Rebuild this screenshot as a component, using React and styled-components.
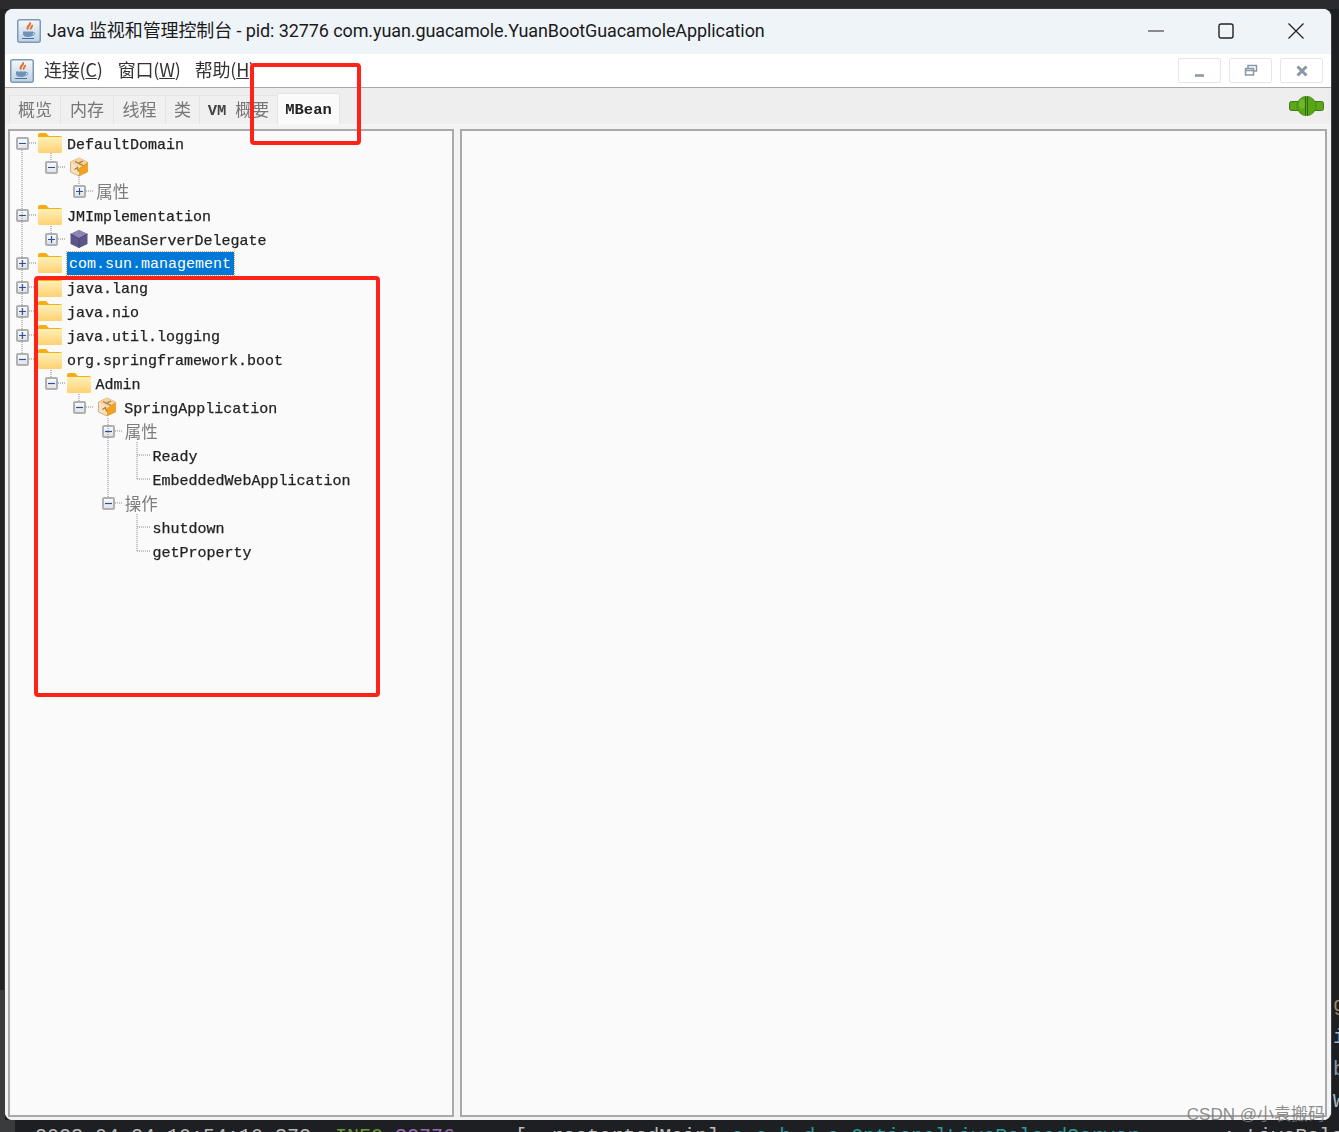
import React from 'react';
import styled, { createGlobalStyle } from 'styled-components';

const Global = createGlobalStyle`
  html, body { margin: 0; padding: 0; background: #1e1f22; }
  #root { width: 1339px; height: 1132px; }
`;

const Page = styled.div`
  position: relative;
  width: 1339px;
  height: 1132px;
  overflow: hidden;
  background: #1e1f22;
  display: grid;
  grid-template-columns: 5px 1326px 8px;
  grid-template-rows: 9px 1111px 12px;
`;
const TopStrip = styled.div`
  grid-column: 1 / 4;
  background: #2b2b2d;
`;
const LeftGutter = styled.div`
  background: linear-gradient(#232325 0 981px, #3a3b3d 981px);
`;
const RightGutter = styled.div`
  overflow: hidden;
  display: flex;
  flex-direction: column;
  padding-top: 985px;
  gap: 9px;
  font: 20px/23px "Liberation Mono", monospace;
  text-indent: 2px;
`;
const Window = styled.div`
  display: flex;
  flex-direction: column;
  background: #f0f0f0;
  border-radius: 8px;
  overflow: hidden;
  box-shadow: 0 0 0 1px #3d3d3f;
`;
const LogLine = styled.div`
  grid-column: 1 / 4;
  overflow: hidden;
  white-space: pre;
  padding: 7px 0 0 35px;
  font: 20px/20px "Liberation Mono", monospace;
  color: #bbbbbb;
  background: linear-gradient(90deg, #3a3b3d 15px, #1e1f22 15px);
`;
const Tone = styled.span`
  color: ${p => p.$c};
`;

const TitleBar = styled.div`
  height: 45px;
  flex: none;
  box-sizing: border-box;
  padding: 0 0 2px 12px;
  display: flex;
  align-items: center;
  background: #eff4f9;
`;
const AppTitle = styled.div`
  margin-left: 6px;
  flex: 1;
  padding-bottom: 3px;
  font: 18px Roboto, "Noto Sans CJK SC", sans-serif;
  letter-spacing: -0.1px;
  color: #1a1a1a;
  white-space: nowrap;
`;
const CaptionButton = styled.div`
  width: 70px;
  height: 43px;
  display: flex;
  align-items: center;
  justify-content: center;
`;
const CaptionGroup = styled.div`
  display: flex;
`;

const MenuBar = styled.div`
  height: 33px;
  flex: none;
  display: flex;
  align-items: center;
  padding: 0 8px 0 5px;
  background: #ffffff;
  border-bottom: 1px solid #a8a8a8;
`;
const MenuItem = styled.span`
  font: 18px "Noto Sans CJK SC", sans-serif;
  letter-spacing: -0.2px;
  color: #333;
  margin-left: ${p => p.$gap}px;
  padding-bottom: 4px;
  white-space: nowrap;
  filter: blur(0.3px);
  u { text-underline-offset: 1px; }
`;
const Spacer = styled.div`
  flex: 1;
`;
const InnerButton = styled.div`
  width: 41px;
  height: 23px;
  margin-left: 8px;
  border: 1px solid #e4e6e8;
  border-radius: 2px;
  display: flex;
  align-items: center;
  justify-content: center;
  background: #fff;
`;

const TabBar = styled.div`
  height: 36px;
  flex: none;
  display: flex;
  align-items: flex-end;
  padding: 0 7px 0 4px;
  background: #eeeeee;
  border-bottom: 1px solid #f6f6f6;
`;
const Tab = styled.div`
  width: ${p => p.$w}px;
  height: ${p => (p.$active ? 31 : 29)}px;
  display: flex;
  align-items: center;
  justify-content: center;
  box-sizing: border-box;
  padding-bottom: 4px;
  background: ${p => (p.$active ? '#fafafa' : '#f0f0f0')};
  border: 1px solid #e4e4e4;
  border-bottom: none;
  margin-right: -1px;
  white-space: pre;
  color: ${p => (p.$active ? '#222' : '#777')};
  font: 17px "Noto Sans CJK SC", sans-serif;
  filter: blur(0.3px);
`;
const MonoBit = styled.span`
  font: bold 15.5px "Liberation Mono", monospace;
  padding-top: 5px;
  color: ${p => p.$c};
  margin-right: ${p => p.$gap || 0}px;
`;
const TabEnd = styled.div`
  margin-left: auto;
  align-self: center;
  display: flex;
`;

const Panels = styled.div`
  flex: 1;
  display: flex;
  gap: 6px;
  padding: 4px 3px 3px 3px;
  background: #f3f3f3;
`;
const Panel = styled.div`
  position: relative;
  box-sizing: border-box;
  width: ${p => p.$w}px;
  border: 2px solid #a9a9a9;
  background: #fafafa;
`;
const Tree = styled.div`
  display: flex;
  flex-direction: column;
`;
const Row = styled.div`
  position: relative;
  height: 24px;
  display: flex;
  align-items: center;
  padding-left: ${p => 6 + p.$level * 28.6}px;
`;
const Expander = styled.div`
  width: 13px;
  height: 13px;
  flex: none;
  margin-right: 10px;
  box-sizing: border-box;
  border: 2px solid #aeb0b3;
  border-radius: 2px;
  background: linear-gradient(#f8f8f8, #e4e4e4);
  display: flex;
  align-items: center;
  justify-content: center;
`;
const EmptySlot = styled.div`
  width: 13px;
  flex: none;
  margin-right: 9px;
`;
const IconSlot = styled.div`
  width: 24px;
  height: 24px;
  flex: none;
  margin: 0 5px 0 -1px;
  display: flex;
  align-items: center;
  justify-content: center;
`;
const Label = styled.span`
  font: 15px/20px "Liberation Mono", monospace;
  padding-top: 5px;
  color: #222;
  white-space: pre;
  -webkit-text-stroke: 0.25px #222;
  filter: blur(0.4px);
`;
const CjkLabel = styled.span`
  font: 16.5px/20px "Noto Sans CJK SC", sans-serif;
  color: #7d7d7d;
  white-space: pre;
  filter: blur(0.35px);
`;
const Selected = styled.span`
  font: 15px/20px "Liberation Mono", monospace;
  color: #fff;
  background: #0078d7;
  outline: 1px dotted #d9a35a;
  padding: 3px 3px 0 2px;
  white-space: pre;
`;
const Guides = styled.svg`
  position: absolute;
  left: 0;
  top: 0;
  pointer-events: none;
`;
const Annotation = styled.div`
  position: absolute;
  left: ${p => p.$x}px;
  top: ${p => p.$y}px;
  width: ${p => p.$w}px;
  height: ${p => p.$h}px;
  box-sizing: border-box;
  border: 4px solid #ff2218;
  border-radius: 4px;
  pointer-events: none;
`;
const Watermark = styled.div`
  position: absolute;
  right: 14px;
  top: 1100px;
  font: 17px "Liberation Sans", "Noto Sans CJK SC", sans-serif;
  color: rgba(120, 120, 120, 0.85);
  white-space: nowrap;
`;

const JavaIcon = ({ size }) => (
  <svg width={size} height={size} viewBox="0 0 24 24">
    <defs>
      <linearGradient id="jg" x1="0" y1="0" x2="0" y2="1">
        <stop offset="0" stopColor="#f6f8fb" />
        <stop offset="1" stopColor="#bcd0e4" />
      </linearGradient>
    </defs>
    <rect x="0.75" y="0.75" width="22.5" height="22.5" rx="2" fill="url(#jg)" stroke="#7d99b5" strokeWidth="1.5" />
    <path d="M12.500 3.500c2.500 2.500-4 3.500-1.500 7M15 6c1 2-2.500 2.500-1 4.500" fill="none" stroke="#e2722a" strokeWidth="2" />
    <path d="M6 12.500h10v2.500c0 2-2 3-5 3s-5-1-5-3z" fill="#6f93b8" />
    <path d="M16 13.500c2.500-.5 2.500 2.500-.5 3" fill="none" stroke="#6f93b8" />
    <path d="M5 19.500h12" stroke="#4f7196" strokeWidth="1.2" />
  </svg>
);
const Folder = () => (
  <svg width="24" height="20" viewBox="0 0 24 20">
    <defs>
      <linearGradient id="fg" x1="0" y1="0" x2="0" y2="1">
        <stop offset="0" stopColor="#ffefb8" />
        <stop offset="1" stopColor="#fdd272" />
      </linearGradient>
    </defs>
    <path d="M0 2C0 .8.800 0 2 0h6l3 3h11c1 0 2 .8 2 2v1H0z" fill="#f5ad12" />
    <path d="M0 4h22.500c1 0 1.500.7 1.500 1.500V18.500c0 1-.7 1.500-1.500 1.500h-21C.7 20 0 19.500 0 18.500z" fill="url(#fg)" />
  </svg>
);
const Cube = ({ purple }) => {
  if (purple) {
    return (
      <svg width="20" height="20" viewBox="0 0 20 20">
        <path d="M10 1l8.500 4v10L10 19l-8.500-4V5z" fill="#5d5488" />
        <path d="M10 1l8.500 4L10 9.500 1.500 5z" fill="#8d84b4" />
        <path d="M1.500 5L10 9.500 18.500 5M10 9.500V19" fill="none" stroke="#453c70" strokeWidth=".8" />
      </svg>
    );
  }
  return (
    <svg width="20" height="20" viewBox="0 0 20 20">
      <path d="M10 1l8.500 4v10L10 19l-8.500-4V5z" fill="#f6e2bf" stroke="#c9a06a" strokeWidth=".8" />
      <path d="M18.500 5v10L10 19v-8z" fill="#f2a01e" />
      <path d="M10 1l8.500 4L10 9.500 1.500 5z" fill="#f3d29c" />
      <path d="M6 4.500l8 4M5.500 12.500l3-2 1 4M10 6l4-2" fill="none" stroke="#a8763a" strokeWidth="1.200" />
    </svg>
  );
};
const Sign = ({ plus }) => (
  <svg width="9" height="9" viewBox="0 0 9 9">
    <path d={plus ? 'M1 4.500h7M4.500 1v7' : 'M1 4.500h7'} stroke="#2a4fa8" strokeWidth="1.200" />
  </svg>
);

const tree = [
  { level: 0, state: 'minus', icon: 'folder', text: 'DefaultDomain' },
  { level: 1, state: 'minus', icon: 'cube' },
  { level: 2, state: 'plus', cjk: '属性' },
  { level: 0, state: 'minus', icon: 'folder', text: 'JMImplementation' },
  { level: 1, state: 'plus', icon: 'purple', text: 'MBeanServerDelegate' },
  { level: 0, state: 'plus', icon: 'folder', text: 'com.sun.management', selected: true },
  { level: 0, state: 'plus', icon: 'folder', text: 'java.lang' },
  { level: 0, state: 'plus', icon: 'folder', text: 'java.nio' },
  { level: 0, state: 'plus', icon: 'folder', text: 'java.util.logging' },
  { level: 0, state: 'minus', icon: 'folder', text: 'org.springframework.boot' },
  { level: 1, state: 'minus', icon: 'folder', text: 'Admin' },
  { level: 2, state: 'minus', icon: 'cube', text: 'SpringApplication' },
  { level: 3, state: 'minus', cjk: '属性' },
  { level: 4, text: 'Ready' },
  { level: 4, text: 'EmbeddedWebApplication' },
  { level: 3, state: 'minus', cjk: '操作' },
  { level: 4, text: 'shutdown' },
  { level: 4, text: 'getProperty' },
];

const guidePaths = [
  'M22 150V353', 'M29 143h8', 'M29 215h8', 'M29 263h8', 'M29 287h8', 'M29 311h8', 'M29 335h8', 'M29 359h8',
  'M51 153v7', 'M58 167h8', 'M79 175v9', 'M86 191h8',
  'M51 226v7', 'M58 239h8',
  'M51 370v7', 'M58 383h7', 'M79 394v7', 'M86 407h8',
  'M108 418v79', 'M115 431h8', 'M115 503h8',
  'M137 442V479', 'M137 455h13', 'M137 479h13',
  'M137 514V551', 'M137 527h13', 'M137 551h13',
];

const TreeRow = ({ r }) => (
  <Row $level={r.level}>
    {r.state ? (
      <Expander>
        <Sign plus={r.state === 'plus'} />
      </Expander>
    ) : (
      <EmptySlot />
    )}
    {r.icon && (
      <IconSlot>
        {r.icon === 'folder' ? <Folder /> : <Cube purple={r.icon === 'purple'} />}
      </IconSlot>
    )}
    {r.cjk && <CjkLabel>{r.cjk}</CjkLabel>}
    {r.text && (r.selected ? <Selected>{r.text}</Selected> : <Label>{r.text}</Label>)}
  </Row>
);

export default function App() {
  return (
    <Page>
      <Global />
      <TopStrip />
      <LeftGutter />
      <Window>
        <TitleBar>
          <JavaIcon size={24} />
          <AppTitle>Java 监视和管理控制台 - pid: 32776 com.yuan.guacamole.YuanBootGuacamoleApplication</AppTitle>
          <CaptionGroup>
            <CaptionButton>
              <svg width="16" height="16" viewBox="0 0 16 16"><path d="M0 8h16" stroke="#222" strokeWidth="1" /></svg>
            </CaptionButton>
            <CaptionButton>
              <svg width="16" height="16" viewBox="0 0 16 16"><rect x="1" y="1" width="14" height="14" rx="2" fill="none" stroke="#222" strokeWidth="1.4" /></svg>
            </CaptionButton>
            <CaptionButton>
              <svg width="16" height="16" viewBox="0 0 16 16"><path d="M.5.500l15 15M15.500.500l-15 15" stroke="#222" strokeWidth="1.3" /></svg>
            </CaptionButton>
          </CaptionGroup>
        </TitleBar>
        <MenuBar>
          <JavaIcon size={24} />
          <MenuItem $gap={10}>连接(<u>C</u>)</MenuItem>
          <MenuItem $gap={15}>窗口(<u>W</u>)</MenuItem>
          <MenuItem $gap={14}>帮助(<u>H</u>)</MenuItem>
          <Spacer />
          <InnerButton>
            <svg width="14" height="14" viewBox="0 0 14 14"><path d="M2 11.500h9" stroke="#8b97a5" strokeWidth="2.600" /></svg>
          </InnerButton>
          <InnerButton>
            <svg width="14" height="14" viewBox="0 0 14 14"><path d="M4 4V1.500h8.500V7H9.500M1.500 4.500h8V11h-8zM1.500 6.500h8" fill="none" stroke="#8b97a5" strokeWidth="1.500" /></svg>
          </InnerButton>
          <InnerButton>
            <svg width="14" height="14" viewBox="0 0 14 14"><path d="M2.500 2.500l9 9M11.500 2.500l-9 9" stroke="#8b97a5" strokeWidth="3" /></svg>
          </InnerButton>
        </MenuBar>
        <TabBar>
          <Tab $w={52}>概览</Tab>
          <Tab $w={54}>内存</Tab>
          <Tab $w={53}>线程</Tab>
          <Tab $w={35}>类</Tab>
          <Tab $w={79}><MonoBit $c="#444" $gap={9}>VM</MonoBit>概要</Tab>
          <Tab $w={63} $active><MonoBit $c="#222">MBean</MonoBit></Tab>
          <TabEnd>
            <svg width="35" height="20" viewBox="0 0 35 20">
              <rect x="0.500" y="5.500" width="34" height="9" rx="2" fill="#5da61e" stroke="#3d7a12" />
              <ellipse cx="17.500" cy="10" rx="9.500" ry="9.800" fill="#58a516" stroke="#3d7a12" strokeWidth=".6" />
              <ellipse cx="13" cy="8" rx="3" ry="5" fill="#6fb82e" />
              <path d="M16.500 .5v19M18.500 .5v19" stroke="#2f6a0c" strokeWidth="1" />
            </svg>
          </TabEnd>
        </TabBar>
        <Panels>
          <Panel $w={446}>
            <Tree>
              {tree.map((r, i) => <TreeRow key={i} r={r} />)}
            </Tree>
            <Guides width="442" height="600" viewBox="10 131 442 600">
              {guidePaths.map(d => (
                <path key={d} d={d} fill="none" stroke="#8a8a8a" strokeDasharray="1 1" />
              ))}
            </Guides>
          </Panel>
          <Panel $w={867} />
        </Panels>
      </Window>
      <RightGutter>
        <Tone $c="#a08a60">g</Tone>
        <Tone $c="#a9b7c6">i</Tone>
        <Tone $c="#8899aa">b</Tone>
        <Tone $c="#a9b7c6">W</Tone>
      </RightGutter>
      <LogLine>
        2023-04-24 10:54:10.372  <Tone $c="#6a9a3a">INFO</Tone> <Tone $c="#9a6ab0">32776</Tone> --- [  restartedMain] <Tone $c="#2a9a9a">o.s.b.d.a.OptionalLiveReloadServer</Tone>       : LiveReload
      </LogLine>
      <Annotation $x={250} $y={63} $w={111} $h={82} />
      <Annotation $x={34} $y={276} $w={346} $h={421} />
      <Watermark>CSDN @小袁搬码</Watermark>
    </Page>
  );
}
